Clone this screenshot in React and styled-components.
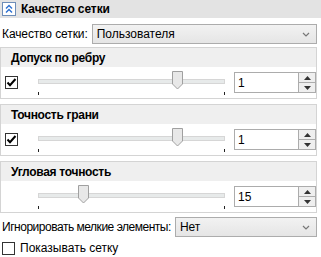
import styled, { createGlobalStyle } from "styled-components";

const GlobalStyle = createGlobalStyle`
  html, body {
    margin: 0;
    padding: 0;
    background: #ffffff;
  }
  body {
    font-family: "Liberation Sans", Arial, sans-serif;
    font-size: 12px;
    color: #000;
  }
`;

const Panel = styled.div`
  width: 321px;
  height: 257px;
  overflow: hidden;
  background: #fff;
`;

const Header = styled.div`
  height: 18px;
  background: #e3e3e3;
  display: flex;
  align-items: center;
  gap: 5px;
  padding-left: 2px;
  font-weight: 700;
  letter-spacing: -0.1px;
`;

const CollapseIcon = styled.div`
  width: 12px;
  height: 12px;
  border: 1px solid #6d8db8;
  background: #fff;
  display: flex;
  align-items: center;
  justify-content: center;
`;

const Body = styled.div`
  padding-right: 4px;
  display: flex;
  flex-direction: column;
`;

const Row = styled.div`
  display: flex;
  align-items: center;
  height: 20px;
  margin-top: ${(p) => p.$top || 0}px;
  padding-left: 2px;
  gap: ${(p) => p.$gap || 4}px;
`;

const Label = styled.span`
  letter-spacing: ${(p) => p.$spacing || 0}px;
  white-space: nowrap;
`;

const Select = styled.div`
  flex: 1;
  height: 18px;
  border: 1px solid #acacac;
  background: linear-gradient(#f2f2f2, #e5e5e5);
  display: flex;
  align-items: center;
  justify-content: space-between;
  padding: 0 6px 0 4px;
`;

const Group = styled.div`
  border: 1px solid #d4d4d4;
  margin-top: ${(p) => p.$top}px;
`;

const GroupTitle = styled.div`
  height: 19px;
  background: #efefef;
  display: flex;
  align-items: center;
  padding-left: 10px;
  font-weight: 700;
  letter-spacing: -0.3px;
`;

const GroupBody = styled.div`
  height: ${(p) => p.$h}px;
  display: flex;
  align-items: center;
`;

const CheckCell = styled.div`
  width: 37px;
  padding-left: 4px;
  box-sizing: border-box;
  display: flex;
  align-items: center;
`;

const Box = styled.div`
  width: 11px;
  height: 11px;
  border: 1px solid #333;
  background: #fff;
  display: flex;
  align-items: center;
  justify-content: center;
`;

const SliderWrap = styled.div`
  position: relative;
  width: 187px;
  height: 100%;
`;

const Track = styled.div`
  position: absolute;
  left: 0;
  right: 0;
  top: 12px;
  height: 3px;
  background: #e7eaea;
  border: 1px solid #d6d6d6;
`;

const Thumb = styled.svg`
  position: absolute;
  top: 4px;
`;

const Tick = styled.div`
  position: absolute;
  top: 25px;
  width: 1px;
  height: 3px;
  background: #222;
`;

const Spin = styled.div`
  margin-left: 9px;
  width: 80px;
  height: 19px;
  border: 1px solid #acacac;
  display: flex;
  background: #fff;
`;

const SpinText = styled.div`
  flex: 1;
  display: flex;
  align-items: center;
  padding-left: 3px;
`;

const SpinButtons = styled.div`
  width: 16px;
  border-left: 1px solid #acacac;
  display: flex;
  flex-direction: column;
`;

const SpinBtn = styled.div`
  flex: 1;
  background: #efefef;
  display: flex;
  align-items: center;
  justify-content: center;
  & + & {
    border-top: 1px solid #acacac;
  }
`;

const Check = () => (
  <svg width="11" height="11" viewBox="0 0 11 11">
    <path d="M1.5 5.5 L4 8.2 L9.5 2" fill="none" stroke="#000" strokeWidth="2" />
  </svg>
);

const Chevron = () => (
  <svg width="8" height="5" viewBox="0 0 8 5">
    <path d="M1 1 L4 4 L7 1" fill="none" stroke="#777" strokeWidth="1.2" />
  </svg>
);

const Slider = ({ pos }) => (
  <SliderWrap>
    <Track />
    <Thumb width="11" height="19" viewBox="0 0 11 19" style={{ left: pos }}>
      <path d="M0.5 0.5 H10.5 V13 L5.5 18 L0.5 13 Z" fill="#e8e8e8" stroke="#a0a0a0" />
    </Thumb>
    <Tick style={{ left: 0 }} />
    <Tick style={{ left: 186 }} />
  </SliderWrap>
);

const SpinBox = ({ value }) => (
  <Spin>
    <SpinText>{value}</SpinText>
    <SpinButtons>
      <SpinBtn>
        <svg width="7" height="4" viewBox="0 0 7 4"><path d="M0 4 L3.5 0 L7 4 Z" fill="#333" /></svg>
      </SpinBtn>
      <SpinBtn>
        <svg width="7" height="4" viewBox="0 0 7 4"><path d="M0 0 L3.5 4 L7 0 Z" fill="#333" /></svg>
      </SpinBtn>
    </SpinButtons>
  </Spin>
);

const SliderGroup = ({ title, top, checked, pos, value }) => (
  <Group $top={top}>
    <GroupTitle>{title}</GroupTitle>
    <GroupBody $h={31}>
      <CheckCell>
        {checked && (
          <Box>
            <Check />
          </Box>
        )}
      </CheckCell>
      <Slider pos={pos} />
      <SpinBox value={value} />
    </GroupBody>
  </Group>
);

export default function App() {
  return (
    <Panel>
      <GlobalStyle />
      <Header>
        <CollapseIcon>
          <svg width="10" height="10" viewBox="0 0 10 10">
            <path d="M2 4.5 L5 1.5 L8 4.5 M2 8.5 L5 5.5 L8 8.5" fill="none" stroke="#2b6fd1" strokeWidth="1.4" />
          </svg>
        </CollapseIcon>
        Качество сетки
      </Header>
      <Body>
        <Row $top={6}>
          <Label $spacing={-0.1}>Качество сетки:</Label>
          <Select>
            Пользователя
            <Chevron />
          </Select>
        </Row>
        <SliderGroup title="Допуск по ребру" top={3} checked pos={134} value="1" />
        <SliderGroup title="Точность грани" top={5} checked pos={134} value="1" />
        <SliderGroup title="Угловая точность" top={5} pos={40} value="15" />
        <Row $top={4}>
          <Label $spacing={-0.48}>Игнорировать мелкие элементы:</Label>
          <Select>
            Нет
            <Chevron />
          </Select>
        </Row>
        <Row $top={1} $gap={5}>
          <Box />
          Показывать сетку
        </Row>
      </Body>
    </Panel>
  );
}
